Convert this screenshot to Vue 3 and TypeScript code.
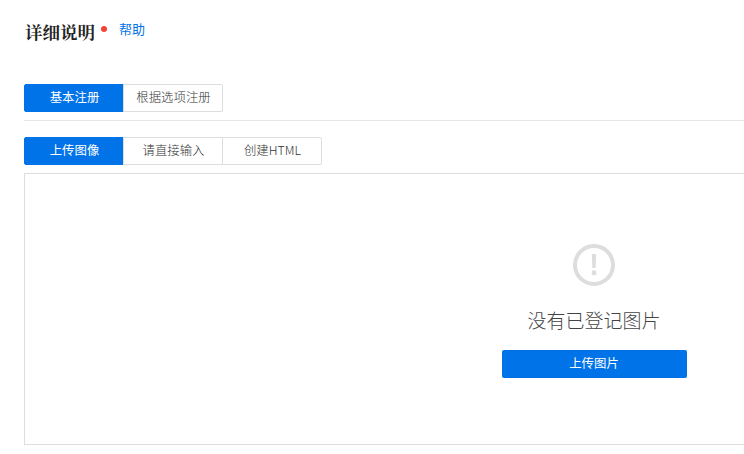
<script setup lang="ts">
const registerTabs: string[] = ['基本注册', '根据选项注册']
const inputTabs: string[] = ['上传图像', '请直接输入', '创建HTML']
</script>

<template>
  <main class="page">
    <header class="head">
      <h1 class="title">详细说明</h1>
      <span class="dot"></span>
      <a class="help">帮助</a>
    </header>

    <div class="tabs first">
      <button v-for="(t, i) in registerTabs" :key="t" class="tab" :class="{ on: i === 0 }">{{ t }}</button>
    </div>
    <div class="rule"></div>
    <div class="tabs">
      <button v-for="(t, i) in inputTabs" :key="t" class="tab" :class="{ on: i === 0 }">{{ t }}</button>
    </div>

    <section class="box">
      <svg class="icon" width="44" height="44" viewBox="0 0 44 44">
        <circle cx="22" cy="22" r="19" fill="none" stroke="#dddddd" stroke-width="4" />
        <path d="M19.8 11h4.4l-.6 14h-3.2z" fill="#dddddd" />
        <rect x="19.8" y="27.5" width="4.4" height="4.6" fill="#dddddd" />
      </svg>
      <p class="empty">没有已登记图片</p>
      <button class="upload">上传图片</button>
    </section>
  </main>
</template>

<style>
html, body { margin: 0; overflow: hidden; background: #fff; }
</style>

<style scoped>
.page {
  width: 1164px;
  padding: 20px 0 0 24px;
  box-sizing: border-box;
  font-family: "Noto Sans CJK SC", "Liberation Sans", sans-serif;
  font-size: 12.4px;
  font-weight: 300;
  color: #333;
}
.head { display: flex; align-items: flex-start; height: 64px; }
.title {
  margin: 0 0 0 1px;
  font-family: "Noto Serif CJK SC", "Liberation Serif", serif;
  font-size: 17.5px;
  line-height: 24px;
  font-weight: 700;
  color: #222;
}
.dot {
  width: 6px; height: 6px; margin: 6px 0 0 6px;
  border-radius: 50%;
  background: #f44336;
}
.help { margin-left: 12px; line-height: 18px; color: #0073e9; font-size: 13px; font-weight: 400; }
.tabs { display: flex; }
.tab {
  width: 100px;
  height: 28px;
  margin: 0 0 0 -1px;
  padding: 0 0 2px 1px;
  border: 1px solid #ddd;
  background: #fff;
  color: #333;
  font: inherit;
  line-height: 24px;
}
.tab:first-child { margin-left: 0; width: 100px; border-radius: 2px 0 0 2px; }
.tab:last-child { border-radius: 0 2px 2px 0; }
.tab.on { background: #0073e9; border-color: #0073e9; color: #fff; font-weight: 400; }
.rule { height: 1px; margin: 8px 0 16px; background: #e4e6ea; }
.box {
  display: flex;
  flex-direction: column;
  align-items: center;
  box-sizing: border-box;
  height: 272px;
  margin-top: 8px;
  padding-top: 69px;
  border: 1px solid #ddd;
}
.icon { display: block; }
.empty { margin: 20px 0 0; font-size: 19px; line-height: 26px; color: #444; }
.upload {
  width: 185px;
  height: 28px;
  margin-top: 17px;
  padding: 0 0 2px;
  border: 0;
  border-radius: 2px;
  background: #0073e9;
  color: #fff;
  font: inherit;
  font-weight: 400;
}
</style>
